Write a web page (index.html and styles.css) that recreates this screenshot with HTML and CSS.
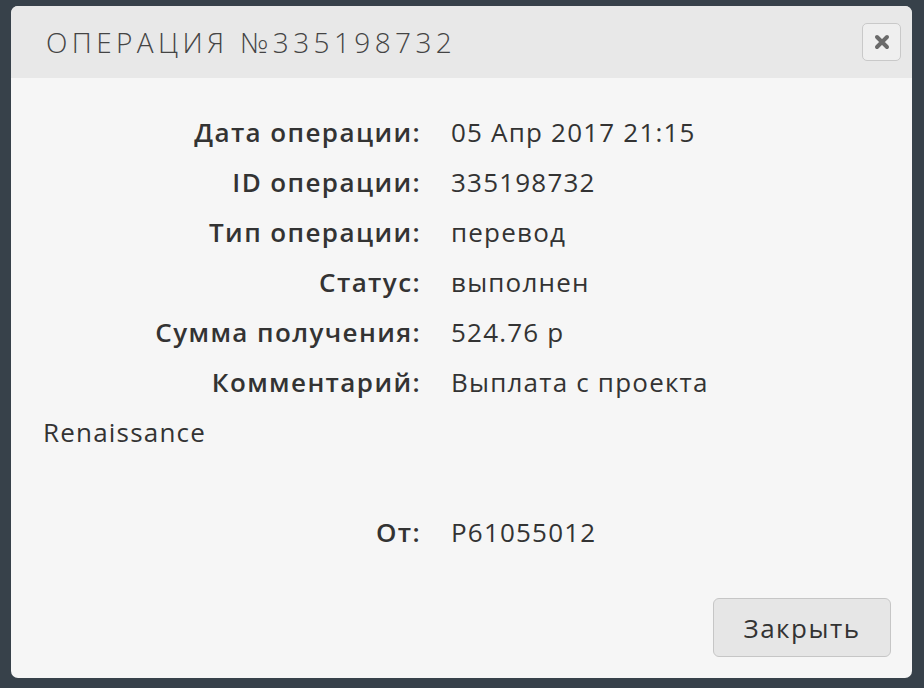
FILE: index.html
```html
<!DOCTYPE html>
<html lang="ru">
<head>
    <meta charset="UTF-8">
    <title>Операция №335198732</title>
    <link rel="stylesheet" href="styles.css">
</head>
<body>
    <div class="modal">
        <div class="modal-header">
            <h3>Операция №335198732</h3>
            <button class="close-btn" title="Закрыть">
                <svg width="20" height="20" viewBox="0 0 20 20">
                    <path d="M5 5 L15 15 M15 5 L5 15" stroke="#6a6a6a" stroke-width="4" stroke-linecap="round"/>
                </svg>
            </button>
        </div>
        <div class="modal-body">
            <div class="row"><span class="label">Дата операции:</span><span class="value">05 Апр 2017 21:15</span></div>
            <div class="row"><span class="label">ID операции:</span><span class="value">335198732</span></div>
            <div class="row"><span class="label">Тип операции:</span><span class="value">перевод</span></div>
            <div class="row"><span class="label">Статус:</span><span class="value">выполнен</span></div>
            <div class="row"><span class="label">Сумма получения:</span><span class="value">524.76 р</span></div>
            <div class="row"><span class="label">Комментарий:</span><span class="value">Выплата с проекта</span></div>
            <div class="row wrap">Renaissance</div>
            <div class="row empty"></div>
            <div class="row"><span class="label">От:</span><span class="value">P61055012</span></div>
        </div>
        <div class="modal-footer">
            <button class="btn">Закрыть</button>
        </div>
    </div>
</body>
</html>
```

FILE: styles.css
```css
html, body {
    margin: 0;
    height: 100%;
}
body {
    background-color: #37414a;
    font-family: "Open Sans", "DejaVu Sans", sans-serif;
    color: #333;
    padding: 6px 12px 10px 11px;
    box-sizing: border-box;
}
.modal {
    background-color: #f6f6f6;
    border-radius: 7px;
    overflow: hidden;
    height: 672px;
    display: flex;
    flex-direction: column;
}
.modal-header {
    background-color: #e8e8e8;
    height: 72px;
    display: flex;
    align-items: center;
    justify-content: space-between;
    padding: 0 11px 0 35px;
}
.modal-header h3 {
    margin: 0;
    font-size: 28px;
    font-weight: 300;
    letter-spacing: 4.4px;
    text-transform: uppercase;
    color: #444;
}
.close-btn {
    width: 39px;
    height: 38px;
    padding: 0;
    border: 1px solid #c9c9c9;
    border-radius: 5px;
    background-color: #efefef;
    display: flex;
    align-items: center;
    justify-content: center;
    cursor: pointer;
}
.modal-body {
    flex: 1;
    padding: 29px 32px 0 32px;
    font-size: 26px;
    letter-spacing: 1.2px;
}
.row {
    display: flex;
    height: 50px;
    line-height: 50px;
    white-space: nowrap;
}
.label {
    width: 378px;
    text-align: right;
    font-weight: 600;
    letter-spacing: 1.4px;
    color: #333;
}
.value {
    margin-left: 30px;
    color: #333;
}
.modal-footer {
    display: flex;
    justify-content: flex-end;
    padding: 0 21px 21px 0;
}
.btn {
    width: 178px;
    height: 59px;
    font-family: "Open Sans", "DejaVu Sans", sans-serif;
    font-size: 26px;
    letter-spacing: 1.5px;
    color: #333;
    background-color: #e6e6e6;
    border: 1px solid #c6c6c6;
    border-radius: 6px;
    cursor: pointer;
}
```
